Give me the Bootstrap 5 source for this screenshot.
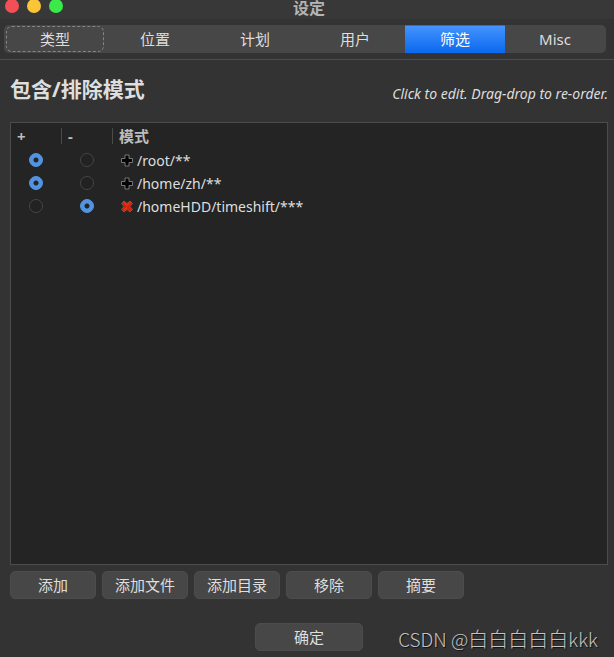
<!DOCTYPE html>
<html lang="zh-CN">
<head>
<meta charset="utf-8">
<meta name="viewport" content="width=device-width, initial-scale=1">
<title>设定</title>
<link href="https://cdn.jsdelivr.net/npm/bootstrap@5.3.0/dist/css/bootstrap.min.css" rel="stylesheet">
<style>
  body { background: #333; color: #dedede; font: 15px/22px "Noto Sans", "Noto Sans CJK SC", sans-serif; }
  .titlebar { display: grid; grid-template-columns: 1fr auto 1fr; height: 19px; padding: 0 1px 0 5px; background: #383838; }
  .titlebar h1 { font-size: 16px; line-height: 16px; color: #b4b4b4; }
  .tabs { padding: 6px 8px 6px 4px; border-bottom: 1px solid #4c4c4c; }
  .tab-track { background: #474747; border-radius: 5px; padding: 0 1px; }
  .tab-track .btn { height: 28px; padding: 0; border: 0; border-radius: 0; color: #dedede; font-size: 15px; line-height: 28px; }
  .tab-track .btn.active { color: #fff; background: linear-gradient(#4795ff, #0a68ee); box-shadow: inset 0 1px #1672f5, inset 0 -1px #0f6cf5; }
  .tab-track .focused { outline: 1px dashed #858585; outline-offset: -2px; border-radius: 7px; }
  .content { padding: 14px 6px 6px 10px; }
  .content h2 { font-size: 21px; line-height: 30px; }
  .hint { font-size: 14px; line-height: 20px; margin-top: 10px; }
  .pattern-box { background: #242424; border: 1px solid #4c4c4c; margin-top: 18px; }
  .patterns { width: 100%; table-layout: fixed; line-height: 23px; }
  .patterns th { height: 26px; padding: 0 6px; color: #bdbdbd; line-height: 26px; background: linear-gradient(#4a4a4a, #4a4a4a) right 5px / 1px 16px no-repeat; }
  .patterns th:last-child { background: none; }
  .patterns td { height: 23px; padding: 0 2px 0 0; font-size: 14px; }
  .patterns td:last-child { padding-left: 7px; }
  .entry { gap: 3px; }
  .narrow { width: 51px; }
  .pick { appearance: none; display: block; width: 14px; height: 14px; margin: 0 auto 1px; border: 1px solid #454545; border-radius: 50%; background: #222; }
  .pick:checked { border-color: #5294e2; background: radial-gradient(circle, #242424 0 2px, #5294e2 3px); }
  .tool-row { gap: 6px; margin-top: 6px; }
  .tool { height: 28px; padding: 0; border: 1px solid #4c4c4c; border-radius: 5px; background: #474747; color: #dedede; font-size: 15px; line-height: 26px; width: 86px; }
  .tool.wide { width: 108px; }
  .watermark { right: 16px; bottom: 4px; color: #c4c4c4; font: 300 19px/28px "Noto Sans CJK SC", sans-serif; text-shadow: 1px 1px 1px #111; }
  .watermark span { font-size: 20px; }
</style>
</head>
<body>
<div class="d-flex flex-column min-vh-100 position-relative">
  <header class="titlebar">
    <svg width="60" height="14" aria-hidden="true"><circle cx="7" cy="6" r="7" fill="#f25056"/><circle cx="29" cy="6" r="7" fill="#fac536"/><circle cx="51" cy="6" r="7" fill="#39ea49"/></svg>
    <h1 class="fw-bold m-0">设定</h1>
  </header>
  <nav class="tabs">
    <div class="tab-track d-flex">
      <button type="button" class="btn flex-fill w-100 focused">类型</button>
      <button type="button" class="btn flex-fill w-100">位置</button>
      <button type="button" class="btn flex-fill w-100">计划</button>
      <button type="button" class="btn flex-fill w-100">用户</button>
      <button type="button" class="btn flex-fill w-100 active">筛选</button>
      <button type="button" class="btn flex-fill w-100">Misc</button>
    </div>
  </nav>
  <main class="content d-flex flex-column flex-grow-1">
    <div class="d-flex justify-content-between">
      <h2 class="fw-bold m-0">包含/排除模式</h2>
      <p class="hint fst-italic mb-0">Click to edit. Drag-drop to re-order.</p>
    </div>
    <div class="pattern-box flex-grow-1">
      <table class="patterns">
        <colgroup><col class="narrow"><col class="narrow"><col></colgroup>
        <thead><tr><th>+</th><th>-</th><th>模式</th></tr></thead>
        <tbody>
          <tr>
            <td><input class="pick" type="radio" name="p1" aria-label="+ /root/**" checked></td>
            <td><input class="pick" type="radio" name="p1" aria-label="- /root/**"></td>
            <td><div class="entry d-flex align-items-center"><svg width="14" height="14" viewBox="0 0 14 14" aria-hidden="true"><path d="M5 1h4v3.500h3.500v4H9V12H5V8.500H1.500v-4H5z" fill="#050505" stroke="#777" stroke-linejoin="round"/></svg><span>/root/**</span></div></td>
          </tr>
          <tr>
            <td><input class="pick" type="radio" name="p2" aria-label="+ /home/zh/**" checked></td>
            <td><input class="pick" type="radio" name="p2" aria-label="- /home/zh/**"></td>
            <td><div class="entry d-flex align-items-center"><svg width="14" height="14" viewBox="0 0 14 14" aria-hidden="true"><path d="M5 1h4v3.500h3.500v4H9V12H5V8.500H1.500v-4H5z" fill="#050505" stroke="#777" stroke-linejoin="round"/></svg><span>/home/zh/**</span></div></td>
          </tr>
          <tr>
            <td><input class="pick" type="radio" name="p3" aria-label="+ /homeHDD/timeshift/***"></td>
            <td><input class="pick" type="radio" name="p3" aria-label="- /homeHDD/timeshift/***" checked></td>
            <td><div class="entry d-flex align-items-center"><svg width="14" height="14" viewBox="0 0 14 14" aria-hidden="true"><path d="M4 1l3 2.500L10 1l2.500 2.500L10 6.500l2.500 3L10 12 7 9.500 4 12 1.500 9.500l2.500-3-2.500-3z" fill="#d81e05" stroke="#8c5148" stroke-linejoin="round"/><path d="M4 2.500l3 3 3-3M4 10l3-2.500" fill="none" stroke="#f04a28"/></svg><span>/homeHDD/timeshift/***</span></div></td>
          </tr>
        </tbody>
      </table>
    </div>
    <div class="tool-row d-flex flex-wrap">
      <button type="button" class="btn tool">添加</button>
      <button type="button" class="btn tool">添加文件</button>
      <button type="button" class="btn tool">添加目录</button>
      <button type="button" class="btn tool">移除</button>
      <button type="button" class="btn tool">摘要</button>
    </div>
    <div class="text-center mt-4"><button type="button" class="btn tool wide">确定</button></div>
  </main>
  <div class="watermark position-absolute">CSDN @<span>白白白白白</span>kkk</div>
</div>
<script src="https://cdn.jsdelivr.net/npm/bootstrap@5.3.0/dist/js/bootstrap.bundle.min.js"></script>
</body>
</html>
